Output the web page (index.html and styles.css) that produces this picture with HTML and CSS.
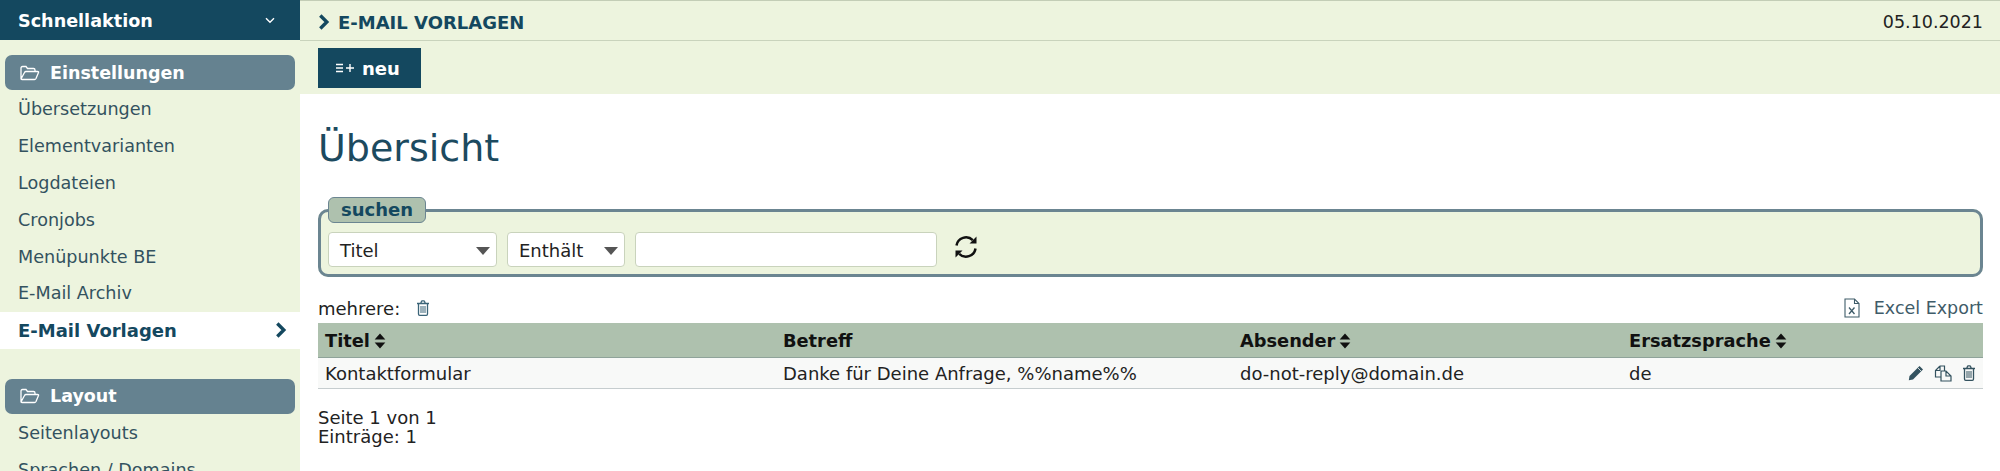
FILE: index.html
```html
<!DOCTYPE html>
<html lang="de">
<head>
    <meta charset="UTF-8">
    <title>E-Mail Vorlagen</title>
    <link rel="stylesheet" href="styles.css">
</head>
<body>
    <svg class="defs" width="0" height="0">
        <symbol id="i-folder" viewBox="0 0 20 16">
            <path d="M1 14V3q0-1.500 1.500-1.500h3.500l1.500 2h6q1.500 0 1.500 1.500v1.500M1 14l3.500-6.500q.5-1 1.500-1h11.500q1.500 0 1 1L16 13.500q-.5 1-1.500 1H2q-1 0-1-.5z" fill="none" stroke="currentColor" stroke-width="1.300"/>
        </symbol>
        <symbol id="i-trash" viewBox="0 0 14 16">
            <path d="M1 3.500h12M2.500 3.500v10.500q0 1.300 1.200 1.300h6.600q1.200 0 1.200-1.300V3.500M4.700 3.500l.7-2q.2-.7 1-.7h1.200q.8 0 1 .7l.7 2" fill="none" stroke="currentColor" stroke-width="1.300"/>
            <path d="M5 6v7M7 6v7M9 6v7" fill="none" stroke="currentColor" stroke-width="1"/>
        </symbol>
        <symbol id="i-sort" viewBox="0 0 11 15">
            <path d="M5.500 .5 10.500 6H.5zM5.500 14.500.5 9h10z" fill="currentColor"/>
        </symbol>
        <symbol id="i-chevron" viewBox="0 0 12 16">
            <path d="M2.300 1.500 8.800 8l-6.500 6.500" fill="none" stroke="currentColor" stroke-width="3.400"/>
        </symbol>
    </svg>

    <div class="app">
        <aside class="sidebar">
            <div class="quick">
                <span>Schnellaktion</span>
                <svg class="quick-arrow" width="10" height="7" viewBox="0 0 10 7"><path d="M1 1.200 5 5.200l4-4" fill="none" stroke="currentColor" stroke-width="1.400"/></svg>
            </div>

            <div class="nav-group">
                <h3 class="nav-head"><svg class="nav-icon"><use href="#i-folder"/></svg>Einstellungen</h3>
                <a class="nav-item">Übersetzungen</a>
                <a class="nav-item">Elementvarianten</a>
                <a class="nav-item">Logdateien</a>
                <a class="nav-item">Cronjobs</a>
                <a class="nav-item">Menüpunkte BE</a>
                <a class="nav-item">E-Mail Archiv</a>
                <a class="nav-item active">E-Mail Vorlagen
                    <svg width="12" height="16"><use href="#i-chevron"/></svg>
                </a>
            </div>

            <div class="nav-group">
                <h3 class="nav-head"><svg class="nav-icon"><use href="#i-folder"/></svg>Layout</h3>
                <a class="nav-item">Seitenlayouts</a>
                <a class="nav-item">Sprachen / Domains</a>
            </div>
        </aside>

        <main class="main">
            <div class="topbar">
                <div class="crumb">
                    <svg width="12" height="16"><use href="#i-chevron"/></svg>
                    E-MAIL VORLAGEN
                </div>
                <div class="date">05.10.2021</div>
            </div>
            <div class="toolbar">
                <button class="btn-new">
                    <svg width="18" height="10" viewBox="0 0 18 10"><path d="M0 1.500h7M0 5h7M0 8.500h7M10 5h8M14 1v8" fill="none" stroke="currentColor" stroke-width="1.400"/></svg>
                    neu
                </button>
            </div>

            <div class="content">
                <h1>Übersicht</h1>

                <fieldset class="search">
                    <legend>suchen</legend>
                    <div class="search-row">
                        <div class="select select-field">Titel</div>
                        <div class="select select-op">Enthält</div>
                        <input class="search-input" type="text">
                        <svg class="refresh" width="24" height="24" viewBox="0 0 24 24">
                            <path d="M2.500 10.500A9.600 9.600 0 0 1 18.800 5.200M21.500 13.500A9.600 9.600 0 0 1 5.200 18.800" fill="none" stroke="currentColor" stroke-width="2.500"/>
                            <path d="M22.500 1.500v7h-7zM1.500 22.500v-7h7z" fill="currentColor"/>
                        </svg>
                    </div>
                </fieldset>

                <div class="list-actions">
                    <div class="multi">mehrere:
                        <svg class="icon-blue" width="14" height="16"><use href="#i-trash"/></svg>
                    </div>
                    <a class="export">
                        <svg width="16" height="20" viewBox="0 0 16 20">
                            <path d="M1 1h9.500L15 5.500V19H1zM10.500 1v4.500H15" fill="none" stroke="currentColor" stroke-width="1.100"/>
                            <path d="M5 9.500 10.500 16M10.500 9.500 5 16" fill="none" stroke="currentColor" stroke-width="1.300"/>
                        </svg>
                        Excel Export
                    </a>
                </div>

                <table class="list">
                    <thead>
                        <tr>
                            <th class="col-title">Titel<svg class="sort"><use href="#i-sort"/></svg></th>
                            <th class="col-subject">Betreff</th>
                            <th class="col-sender">Absender<svg class="sort"><use href="#i-sort"/></svg></th>
                            <th>Ersatzsprache<svg class="sort"><use href="#i-sort"/></svg></th>
                        </tr>
                    </thead>
                    <tbody>
                        <tr>
                            <td>Kontaktformular</td>
                            <td>Danke für Deine Anfrage, %%name%%</td>
                            <td>do-not-reply@domain.de</td>
                            <td>
                                <div class="lang-cell">de
                                    <span class="row-icons">
                                        <svg width="16" height="16" viewBox="0 0 16 16"><path d="M11.500 1 15 4.500 5 14.500 .8 15.200 1.500 11z" fill="currentColor"/><path d="M9.800 2.800l3.400 3.400" stroke="#f8f9f8" stroke-width=".8"/></svg>
                                        <svg width="18" height="17" viewBox="0 0 18 17"><path d="M6 1 1.500 5.500V12H7M6 1h4.500v5M6 1v4.500H1.500M12 6H7.500L7 6.500V16h10V11zM12 6v5h5" fill="none" stroke="currentColor" stroke-width="1.200"/></svg>
                                        <svg width="14" height="16"><use href="#i-trash"/></svg>
                                    </span>
                                </div>
                            </td>
                        </tr>
                    </tbody>
                </table>

                <div class="pager">Seite 1 von 1<br>Einträge: 1</div>
            </div>
        </main>
    </div>
</body>
</html>
```

FILE: styles.css
```css
html, body {
    margin: 0;
    height: 100%;
    overflow: hidden;
}
body {
    font-family: "DejaVu Sans", sans-serif;
    font-size: 18px;
    color: #222;
    background: #fff;
}
.defs {
    display: none;
}
.app {
    display: flex;
    height: 100vh;
}

/* sidebar */
.sidebar {
    width: 300px;
    flex-shrink: 0;
    background: #edf4de;
    color: #33525f;
    font-size: 17.600px;
    overflow: hidden;
}
.quick {
    height: 39px;
    padding: 1px 25px 0 18px;
    display: flex;
    align-items: center;
    justify-content: space-between;
    background: #14485f;
    color: #fff;
    font-weight: bold;
}
.nav-group {
    padding: 15px 5px 0;
    margin-bottom: 15px;
}
.nav-head {
    margin: 0 0 1px;
    height: 35px;
    display: flex;
    align-items: center;
    padding-left: 15px;
    border-radius: 7px;
    background: #658290;
    color: #fff;
    font-size: 17.500px;
    font-weight: bold;
}
.nav-icon {
    width: 20px;
    height: 16px;
    margin-right: 10px;
}
.nav-item {
    display: flex;
    align-items: center;
    justify-content: space-between;
    height: 36.800px;
    margin: 0 -5px;
    padding: 0 13px 0 18px;
}
.nav-item.active {
    background: #fff;
    color: #14485f;
    font-size: 18px;
    font-weight: bold;
}

/* top of main */
.main {
    flex: 1;
    min-width: 0;
}
.topbar {
    height: 36px;
    padding: 3px 17px 0 18px;
    display: flex;
    align-items: center;
    justify-content: space-between;
    background: #edf4de;
    border-top: 1px solid #c3cdb6;
    border-bottom: 1px solid #c9d3bc;
}
.crumb {
    display: flex;
    align-items: center;
    gap: 8px;
    color: #14485f;
    font-weight: bold;
}
.date {
    font-size: 17.500px;
}
.toolbar {
    height: 53px;
    padding: 7px 0 0 18px;
    box-sizing: border-box;
    background: #edf4de;
}
.btn-new {
    display: flex;
    align-items: center;
    gap: 8px;
    width: 103px;
    height: 40px;
    padding: 0 0 0 18px;
    border: none;
    background: #14485f;
    color: #fff;
    font-family: inherit;
    font-size: 18px;
    font-weight: bold;
}

/* content */
.content {
    padding: 0 17px 0 18px;
}
h1 {
    margin: 0;
    padding-top: 31px;
    height: 72px;
    font-size: 38px;
    font-weight: normal;
    line-height: 47px;
    color: #1c4a5f;
}
.search {
    margin: 0;
    padding: 0 7px;
    min-width: 0;
    height: 80px;
    box-sizing: border-box;
    background: #edf4de;
    border: 3px solid #6b8591;
    border-radius: 10px;
}
.search legend {
    padding: 0 12px;
    height: 26px;
    box-sizing: border-box;
    line-height: 24px;
    background: #aec1ae;
    border: 1px solid #6b8591;
    border-radius: 6px;
    color: #14485f;
    font-weight: bold;
}
.search-row {
    display: flex;
    align-items: center;
    gap: 10px;
    margin-top: 9px;
}
.select {
    position: relative;
    height: 35px;
    line-height: 35px;
    padding-left: 11px;
    box-sizing: border-box;
    background: #fff;
    border: 1px solid #c9d3bc;
    border-radius: 4px;
}
.select::after {
    content: "";
    position: absolute;
    right: 6px;
    top: 14px;
    border: 7px solid transparent;
    border-top: 8px solid #555;
    border-bottom: 0;
}
.select-field {
    width: 169px;
}
.select-op {
    width: 118px;
}
.search-input {
    width: 302px;
    height: 35px;
    box-sizing: border-box;
    background: #fff;
    border: 1px solid #c9d3bc;
    border-radius: 4px;
}
.refresh {
    margin: 0 0 6px 7px;
    color: #111;
}
.list-actions {
    display: flex;
    align-items: center;
    justify-content: space-between;
    height: 24px;
    margin-top: 19px;
    margin-bottom: 3px;
}
.multi {
    display: flex;
    align-items: center;
    gap: 16px;
}
.icon-blue {
    color: #3b6478;
}
.export {
    display: flex;
    align-items: center;
    gap: 14px;
    color: #3f5c69;
    font-size: 17.500px;
}
.list {
    width: 100%;
    border-collapse: collapse;
    table-layout: fixed;
}
.list th {
    height: 34px;
    padding: 0 7px;
    text-align: left;
    background: #aec1ae;
    border-bottom: 1px solid #8fa39a;
    color: #111;
    font-size: 17.800px;
}
.list td {
    height: 30px;
    padding: 0 7px;
    background: #f8f9f8;
    border-bottom: 1px solid #c6cdcf;
}
.col-title {
    width: 444px;
}
.col-subject {
    width: 443px;
}
.col-sender {
    width: 375px;
}
.sort {
    width: 12px;
    height: 16px;
    margin-left: 4px;
    vertical-align: -2px;
}
.lang-cell {
    display: flex;
    align-items: center;
    justify-content: space-between;
}
.row-icons {
    display: flex;
    align-items: center;
    gap: 10px;
    color: #33525f;
}
.pager {
    margin-top: 19px;
    line-height: 19px;
}
```
